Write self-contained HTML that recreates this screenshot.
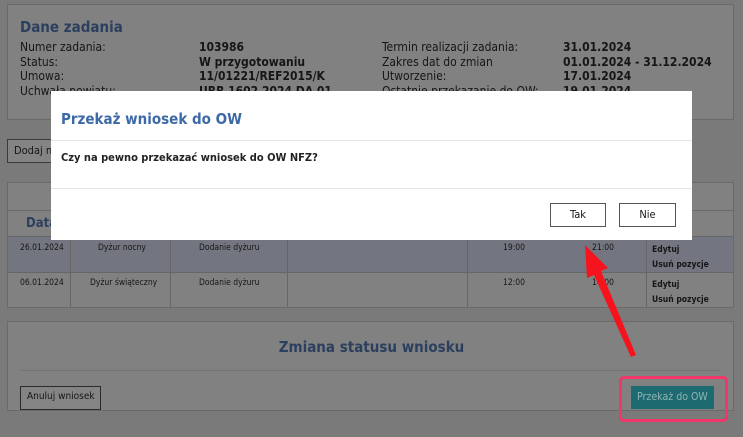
<!DOCTYPE html><html style="background:#7a7a7a"><head><style>
*{margin:0;padding:0;box-sizing:border-box}
body{width:743px;height:437px;background:#7a7a7a;font-family:"DejaVu Sans Condensed","DejaVu Sans","Liberation Sans",sans-serif;position:relative;overflow:hidden;color:#161616}
.a{position:absolute}
.p{background:#818181;border:1px solid #6a6a6a}
.t{font-size:12px;white-space:nowrap}
.b{font-weight:bold}
.sm{font-size:8.5px;white-space:nowrap}
</style></head><body>
<div class="a" style="left:0;top:0;width:743px;height:437px;background:#7a7a7a"></div>
<div class="a p" style="left:7px;top:4px;width:727px;height:116px"></div>
<div class="a b" style="left:20px;top:18px;font-size:15px;color:#2b3f5f">Dane zadania</div>
<div class="a t" style="left:20px;top:40px;line-height:14.5px">Numer zadania:<br>Status:<br>Umowa:<br>Uchwała powiatu:</div>
<div class="a t b" style="left:199px;top:40px;line-height:14.5px">103986<br>W przygotowaniu<br>11/01221/REF2015/K<br>URR 1602 2024 DA 01</div>
<div class="a t" style="left:382px;top:40px;line-height:14.5px">Termin realizacji zadania:<br>Zakres dat do zmian<br>Utworzenie:<br>Ostatnie przekazanie do OW:</div>
<div class="a t b" style="left:563px;top:40px;line-height:14.5px">31.01.2024<br>01.01.2024 - 31.12.2024<br>17.01.2024<br>19.01.2024</div>
<div class="a" style="left:7px;top:139px;width:60px;height:24px;border:1px solid #3a3a3a;background:#848484"></div>
<div class="a t" style="left:14px;top:144px;font-size:11px">Dodaj no</div>
<div class="a p" style="left:7px;top:182px;width:727px;height:126px"></div>
<div class="a" style="left:8px;top:210px;width:725px;height:1px;background:#6a6a6a"></div>
<div class="a b" style="left:26px;top:216px;font-size:13px;color:#2b3f5f">Data</div>
<div class="a" style="left:8px;top:236px;width:725px;height:36px;background:#737680"></div>
<div class="a" style="left:8px;top:236px;width:725px;height:1px;background:#666"></div>
<div class="a" style="left:8px;top:272px;width:725px;height:1px;background:#666"></div>
<div class="a" style="left:70px;top:236px;width:1px;height:71px;background:#666"></div>
<div class="a" style="left:170px;top:236px;width:1px;height:71px;background:#666"></div>
<div class="a" style="left:287px;top:236px;width:1px;height:71px;background:#666"></div>
<div class="a" style="left:467px;top:236px;width:1px;height:71px;background:#666"></div>
<div class="a" style="left:646px;top:236px;width:1px;height:71px;background:#666"></div>
<div class="a sm" style="left:20px;top:243px">26.01.2024</div>
<div class="a sm" style="left:98px;top:243px">Dyżur nocny</div>
<div class="a sm" style="left:199px;top:243px">Dodanie dyżuru</div>
<div class="a sm" style="left:503px;top:243px">19:00</div>
<div class="a sm" style="left:592px;top:243px">21:00</div>
<div class="a sm b" style="left:652px;top:243px;line-height:15px">Edytuj<br>Usuń pozycje</div>
<div class="a sm" style="left:20px;top:278px">06.01.2024</div>
<div class="a sm" style="left:90px;top:278px">Dyżur świąteczny</div>
<div class="a sm" style="left:199px;top:278px">Dodanie dyżuru</div>
<div class="a sm" style="left:503px;top:278px">12:00</div>
<div class="a sm" style="left:592px;top:278px">14:00</div>
<div class="a sm b" style="left:652px;top:278px;line-height:15px">Edytuj<br>Usuń pozycje</div>
<div class="a p" style="left:7px;top:321px;width:727px;height:90px"></div>
<div class="a b" style="left:0;width:743px;text-align:center;top:338px;font-size:15px;color:#2b3f5f">Zmiana statusu wniosku</div>
<div class="a" style="left:20px;top:370px;width:700px;height:1px;background:#737373"></div>
<div class="a" style="left:20px;top:386px;width:81px;height:24px;border:1px solid #2a2a2a;background:#848484"></div>
<div class="a t" style="left:27px;top:391px;font-size:10px">Anuluj wniosek</div>
<div class="a" style="left:631px;top:386px;width:83px;height:23px;background:#1d6b70"></div>
<div class="a t" style="left:637px;top:391px;font-size:10.5px;color:#8fb3b5">Przekaż do OW</div>
<div class="a" style="left:619px;top:376px;width:109px;height:46px;border:3px solid #f0366a;border-radius:5px"></div>
<div class="a" style="left:51px;top:91px;width:641px;height:149px;background:#fff"></div>
<div class="a b" style="left:61px;top:110px;font-size:15px;color:#3d6aa6">Przekaż wniosek do OW</div>
<div class="a" style="left:51px;top:140px;width:641px;height:1px;background:#e5e5e5"></div>
<div class="a t b" style="left:61px;top:151px;font-size:11px;color:#222">Czy na pewno przekazać wniosek do OW NFZ?</div>
<div class="a" style="left:51px;top:188px;width:641px;height:1px;background:#e5e5e5"></div>
<div class="a" style="left:550px;top:203px;width:56px;height:24px;border:1px solid #555;background:#fff;font-size:11px;text-align:center;line-height:22px">Tak</div>
<div class="a" style="left:619px;top:203px;width:57px;height:24px;border:1px solid #555;background:#fff;font-size:11px;text-align:center;line-height:22px">Nie</div>
<svg class="a" style="left:0;top:0" width="743" height="437"><polygon points="585,245 608,268 601,271 636,355 631,357 594,275 587,278" fill="#f5141e"/></svg>
</body></html>
